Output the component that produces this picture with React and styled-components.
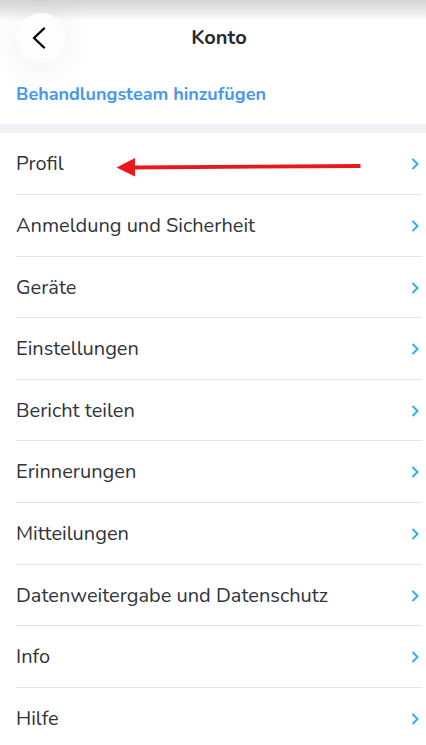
import React from 'react'
import styled, { createGlobalStyle } from 'styled-components'

const GlobalStyle = createGlobalStyle`
    * {
        box-sizing: border-box;
    }
    body {
        margin: 0;
        background-color: white;
        color: #30343b;
        font-family: Nunito, Lato, sans-serif;
    }
`

const Header = styled.header`
    display: grid;
    grid-template-columns: 50px 1fr 50px;
    align-items: center;
    padding: 13px 4px 0 16px;
    background: linear-gradient(#d4d4d4, #e6e6e6 10px, white 21px);
`

const BackButton = styled.button`
    display: flex;
    align-items: center;
    justify-content: center;
    width: 50px;
    height: 50px;
    padding: 0 4px 0 0;
    border: none;
    border-radius: 50%;
    background-color: #fdfdfd;
    color: black;
    box-shadow: 0 4px 36px rgba(0, 0, 0, 0.08);
    cursor: pointer;
`

const Title = styled.h1`
    margin: 0;
    color: #262a31;
    font-size: 20px;
    line-height: 24px;
    font-weight: 700;
    text-align: center;
`

const TeamSection = styled.div`
    padding: 19px 4px 18px 16px;
    border-bottom: 9px solid #f0f1f6;
`

const TeamLink = styled.a`
    display: block;
    color: #4796f0;
    font-size: 18px;
    line-height: 24px;
    font-weight: 700;
    text-decoration: none;
`

const Menu = styled.ul`
    display: grid;
    grid-auto-rows: 62px 62px 61px 62px 61px;
    margin: 0;
    padding: 0 4px 0 16px;
    list-style: none;
`

const MenuItem = styled.li`
    position: relative;
    display: flex;
    border-bottom: 1px solid #e4e5e7;

    &:last-child {
        border-bottom: none;
    }
`

const MenuLink = styled.a`
    flex: 1;
    display: flex;
    align-items: center;
    justify-content: space-between;
    padding-top: 1px;
    color: inherit;
    font-size: 20px;
    line-height: 24px;
    text-decoration: none;
`

const Pointer = styled.svg`
    position: absolute;
    top: 24px;
    left: 100px;
    pointer-events: none;
`

const items = [
    'Profil',
    'Anmeldung und Sicherheit',
    'Geräte',
    'Einstellungen',
    'Bericht teilen',
    'Erinnerungen',
    'Mitteilungen',
    'Datenweitergabe und Datenschutz',
    'Info',
    'Hilfe',
]

const BackIcon = () => (
    <svg width="14" height="22" viewBox="0 0 14 22" fill="none" aria-hidden="true">
        <path d="M12 1.5 2 11l10 9.5" stroke="currentColor" strokeWidth="2.4" strokeLinecap="round" strokeLinejoin="round" />
    </svg>
)

const Chevron = () => (
    <svg width="12" height="12" viewBox="0 0 12 12" fill="none" aria-hidden="true">
        <path d="M2.5 1l5 5-5 5" stroke="#2bb0f0" strokeWidth="2" />
    </svg>
)

const Arrow = () => (
    <Pointer width="246" height="20" viewBox="0 0 246 20" aria-hidden="true">
        <path d="M18 10.5L244.5 9" stroke="#e8191c" strokeWidth="3.8" />
        <path d="M0.5 10.5L19 1v18.5z" fill="#e8191c" />
    </Pointer>
)

export default (() => {
    return (
        <>
            <GlobalStyle />
            <Header>
                <BackButton type="button" aria-label="Zurück"><BackIcon /></BackButton>
                <Title>Konto</Title>
            </Header>
            <TeamSection>
                <TeamLink href="#team">Behandlungsteam hinzufügen</TeamLink>
            </TeamSection>
            <nav>
                <Menu>
                    {items.map((item, index) => (
                        <MenuItem key={item}>
                            <MenuLink href="#">{item}<Chevron /></MenuLink>
                            {index === 0 && <Arrow />}
                        </MenuItem>
                    ))}
                </Menu>
            </nav>
        </>
    )
})
